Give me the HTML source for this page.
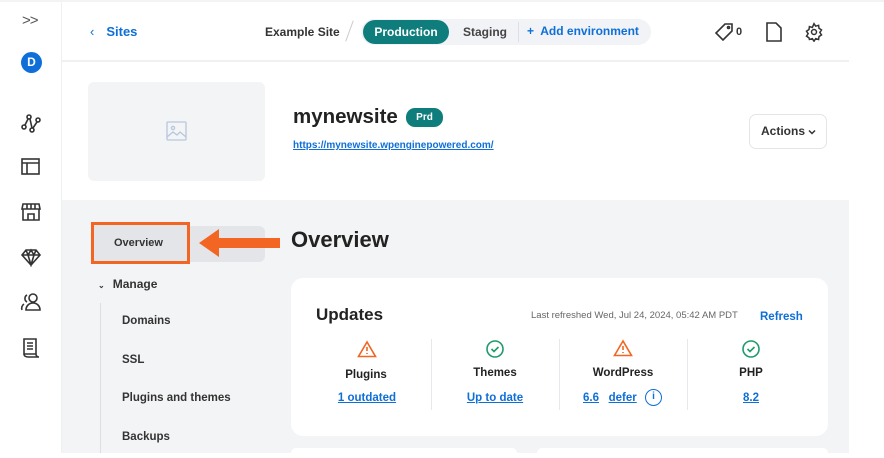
<!DOCTYPE html>
<html><head><style>
*{box-sizing:border-box;margin:0;padding:0}
body{width:884px;height:453px;overflow:hidden;background:#fff;font-family:"Liberation Sans",sans-serif;color:#1f2328;position:relative}
.abs{position:absolute}
a{color:#0e6fd8;text-decoration:underline}
.b{font-weight:bold}
</style></head><body>
<div class="abs" style="left:0;top:0;width:884px;height:2px;background:#f2f3f5"></div>
<div class="abs" style="left:61px;top:2px;width:1px;height:451px;background:#eef0f2"></div>
<div class="abs" style="left:62px;top:60px;width:787px;height:2px;background:#eef0f2"></div>
<!-- sidebar -->
<div class="abs" style="left:22px;top:12px;font-size:15px;color:#555;letter-spacing:-1px">&gt;&gt;</div>
<div class="abs" style="left:21px;top:52px;width:21px;height:21px;border-radius:50%;background:#0e6fd8;color:#fff;font-size:12px;font-weight:bold;text-align:center;line-height:21px">D</div>
<svg class="abs" style="left:20px;top:112px" width="22" height="22" viewBox="0 0 22 22" fill="none" stroke="#333" stroke-width="1.6"><circle cx="4" cy="15" r="2"/><circle cx="9" cy="5" r="2"/><circle cx="12" cy="18" r="2"/><circle cx="18" cy="8" r="2"/><path d="M5 13l3-6M10 7l2 9M13 16l4-6"/></svg>
<svg class="abs" style="left:20px;top:157px" width="22" height="20" viewBox="0 0 22 20" fill="none" stroke="#333" stroke-width="1.6"><rect x="2" y="2" width="17" height="15"/><path d="M2 6h17M7 6v11"/></svg>
<svg class="abs" style="left:20px;top:202px" width="22" height="20" viewBox="0 0 22 20" fill="none" stroke="#333" stroke-width="1.6"><path d="M3 2h16l1 5H2zM3 7v11h16V7M8 18v-6h6v6M7 2v5M11 2v5M15 2v5"/></svg>
<svg class="abs" style="left:20px;top:247px" width="22" height="20" viewBox="0 0 22 20" fill="none" stroke="#333" stroke-width="1.6"><path d="M6 3h10l4 5-9 10L2 8zM2 8h18M8 8l3 10 3-10M6 3l2 5 3-5 3 5 2-5"/></svg>
<svg class="abs" style="left:20px;top:292px" width="22" height="20" viewBox="0 0 22 20" fill="none" stroke="#333" stroke-width="1.6"><circle cx="13" cy="6" r="4"/><path d="M6 18c0-4 3-7 7-7s7 3 7 7zM7 3a4 4 0 0 0 0 7M4 12a5 5 0 0 0-2 6"/></svg>
<svg class="abs" style="left:21px;top:337px" width="20" height="22" viewBox="0 0 20 22" fill="none" stroke="#333" stroke-width="1.6"><path d="M3 2h12v15H3zM6 6h6M6 9h6M6 12h6M3 17c0 2 2 3 4 3h11c-2 0-3-1-3-3"/></svg>
<!-- header -->
<div class="abs" style="left:90px;top:24px;font-size:13px;color:#0e6fd8"><span style="margin-right:12px">&lsaquo;</span><span class="b" style="font-weight:600">Sites</span></div>
<div class="abs b" style="left:265px;top:25px;font-size:12px;color:#333">Example Site</div>
<div class="abs" style="left:349px;top:20px;width:1px;height:22px;background:#ccc;transform:rotate(20deg)"></div>
<div class="abs" style="left:361px;top:19px;width:290px;height:26px;border-radius:13px;background:#f1f3f6"></div>
<div class="abs b" style="left:363px;top:20px;width:86px;height:24px;border-radius:12px;background:#0f7d7c;color:#fff;font-size:12px;text-align:center;line-height:24px">Production</div>
<div class="abs b" style="left:463px;top:25px;font-size:12px;color:#444">Staging</div>
<div class="abs" style="left:518px;top:22px;width:1px;height:20px;background:#dde"></div>
<div class="abs b" style="left:527px;top:24px;font-size:12px;color:#0e6fd8">+&nbsp; Add environment</div>
<svg class="abs" style="left:714px;top:22px" width="20" height="20" viewBox="0 0 20 20" fill="none" stroke="#333" stroke-width="1.6"><path d="M11 2h7v7l-9 9-7-7z"/><circle cx="14.5" cy="5.5" r="1"/></svg>
<div class="abs b" style="left:736px;top:26px;font-size:11px;color:#333">0</div>
<svg class="abs" style="left:765px;top:22px" width="18" height="20" viewBox="0 0 18 20" fill="none" stroke="#333" stroke-width="1.6"><path d="M2 1h9l5 5v13H2z"/></svg>
<svg class="abs" style="left:804px;top:22px" width="20" height="20" viewBox="0 0 24 24" fill="none" stroke="#333" stroke-width="1.8"><circle cx="12" cy="12" r="3"/><path d="M12 2l2 3 3.5-1 .5 3.5 3 2-2 3 2 3-3 2-.5 3.5-3.5-1-2 3-2-3-3.5 1L6 19l-3-2 2-3-2-3 3-2 .5-3.5 3.5 1z"/></svg>
<!-- site block -->
<div class="abs" style="left:88px;top:82px;width:177px;height:99px;border-radius:6px;background:#f3f4f6"></div>
<svg class="abs" style="left:166px;top:121px" width="21" height="20" viewBox="0 0 21 20" fill="none" stroke="#b7c7dc" stroke-width="1.3"><rect x="1" y="1" width="19" height="18" rx="1"/><circle cx="7" cy="7" r="1.6"/><path d="M1 16l6-5 4 3 3-3 6 5"/></svg>
<div class="abs b" style="left:293px;top:105px;font-size:20.5px;color:#222">mynewsite</div>
<div class="abs b" style="left:406px;top:108px;width:37px;height:19px;border-radius:9px;background:#0f7d7c;color:#fff;font-size:10px;text-align:center;line-height:19px">Prd</div>
<a class="abs" style="left:293px;top:140px;font-size:10px;font-weight:bold">https://mynewsite.wpenginepowered.com/</a>
<div class="abs b" style="left:749px;top:114px;width:78px;height:35px;border:1px solid #e3e5e8;border-radius:7px;font-size:12px;color:#333;line-height:33px;padding-left:11px">Actions <svg width="8" height="6" viewBox="0 0 8 6" fill="none" stroke="#333" stroke-width="1.5"><path d="M1 1.5l3 3 3-3"/></svg></div>
<!-- gray area -->
<div class="abs" style="left:62px;top:200px;width:787px;height:253px;background:#f3f4f6"></div>
<div class="abs" style="left:91px;top:226px;width:174px;height:36px;border-radius:6px;background:#e3e5e8"></div>
<div class="abs" style="left:91px;top:222px;width:99px;height:42px;border:3px solid #f26522;background:#e3e5e8"></div>
<div class="abs b" style="left:114px;top:237px;font-size:11px;color:#333">Overview</div>
<svg class="abs" style="left:196px;top:227px" width="90" height="32" viewBox="0 0 90 32"><path d="M3 16L23 2v9h61v10H23v9z" fill="#f26522"/></svg>
<div class="abs b" style="left:291px;top:227px;font-size:22px;color:#222">Overview</div>
<div class="abs b" style="left:98px;top:277px;font-size:12px;color:#333"><span style="font-size:8px;margin-right:8px">&#8964;</span>Manage</div>
<div class="abs" style="left:100px;top:303px;width:1px;height:150px;background:#dcdfe3"></div>
<div class="abs b" style="left:122px;top:315px;font-size:11.5px;color:#333">Domains</div>
<div class="abs b" style="left:122px;top:354px;font-size:11.5px;color:#333">SSL</div>
<div class="abs b" style="left:122px;top:392px;font-size:11.5px;color:#333">Plugins and themes</div>
<div class="abs b" style="left:122px;top:431px;font-size:11.5px;color:#333">Backups</div>
<!-- card -->
<div class="abs" style="left:291px;top:278px;width:537px;height:158px;border-radius:12px;background:#fff"></div>
<div class="abs" style="left:291px;top:448px;width:226px;height:10px;border-radius:10px;background:#fff"></div>
<div class="abs" style="left:537px;top:448px;width:291px;height:10px;border-radius:10px;background:#fff"></div>
<div class="abs b" style="left:316px;top:305px;font-size:17px;color:#222">Updates</div>
<div class="abs" style="left:531px;top:310px;font-size:9.5px;color:#666">Last refreshed Wed, Jul 24, 2024, 05:42 AM PDT</div>
<div class="abs b" style="left:760px;top:308px;font-size:11.5px;color:#0e6fd8;top:311px">Refresh</div>
<div class="abs" style="left:431px;top:339px;width:1px;height:71px;background:#e6e8ea"></div>
<div class="abs" style="left:559px;top:339px;width:1px;height:71px;background:#e6e8ea"></div>
<div class="abs" style="left:687px;top:339px;width:1px;height:71px;background:#e6e8ea"></div>
<svg class="abs" style="left:357px;top:340px" width="20" height="18" viewBox="0 0 20 18" fill="none" stroke="#f26522" stroke-width="1.6"><path d="M10 2L1.5 16.5h17zM10 7v4M10 13v1"/></svg>
<svg class="abs" style="left:485px;top:339px" width="20" height="20" viewBox="0 0 20 20" fill="none" stroke="#1f9a6b" stroke-width="1.6"><circle cx="10" cy="10" r="8"/><path d="M6.5 10l2.5 2.5 4.5-4.5"/></svg>
<svg class="abs" style="left:613px;top:339px" width="20" height="18" viewBox="0 0 20 18" fill="none" stroke="#f26522" stroke-width="1.6"><path d="M10 2L1.5 16.5h17zM10 7v4M10 13v1"/></svg>
<svg class="abs" style="left:741px;top:339px" width="20" height="20" viewBox="0 0 20 20" fill="none" stroke="#1f9a6b" stroke-width="1.6"><circle cx="10" cy="10" r="8"/><path d="M6.5 10l2.5 2.5 4.5-4.5"/></svg>
<div class="abs b" style="left:311px;top:369px;width:110px;text-align:center;font-size:11.5px;color:#222">Plugins</div>
<div class="abs b" style="left:440px;top:367px;width:110px;text-align:center;font-size:11.5px;color:#222">Themes</div>
<div class="abs b" style="left:568px;top:367px;width:110px;text-align:center;font-size:11.5px;color:#222">WordPress</div>
<div class="abs b" style="left:696px;top:367px;width:110px;text-align:center;font-size:11.5px;color:#222">PHP</div>
<a class="abs b" style="left:311px;top:392px;width:112px;text-align:center;font-size:11.5px">1 outdated</a>
<a class="abs b" style="left:440px;top:392px;width:110px;text-align:center;font-size:11.5px">Up to date</a>
<div class="abs b" style="left:583px;top:392px;font-size:11.5px"><a>6.6</a>&nbsp;&nbsp; <a>defer</a></div>
<div class="abs b" style="left:645px;top:389px;width:17px;height:17px;border:1.6px solid #0e6fd8;border-radius:50%;color:#0e6fd8;font-size:10px;text-align:center;line-height:14px">i</div>
<a class="abs b" style="left:696px;top:392px;width:110px;text-align:center;font-size:11.5px">8.2</a>
</body></html>
